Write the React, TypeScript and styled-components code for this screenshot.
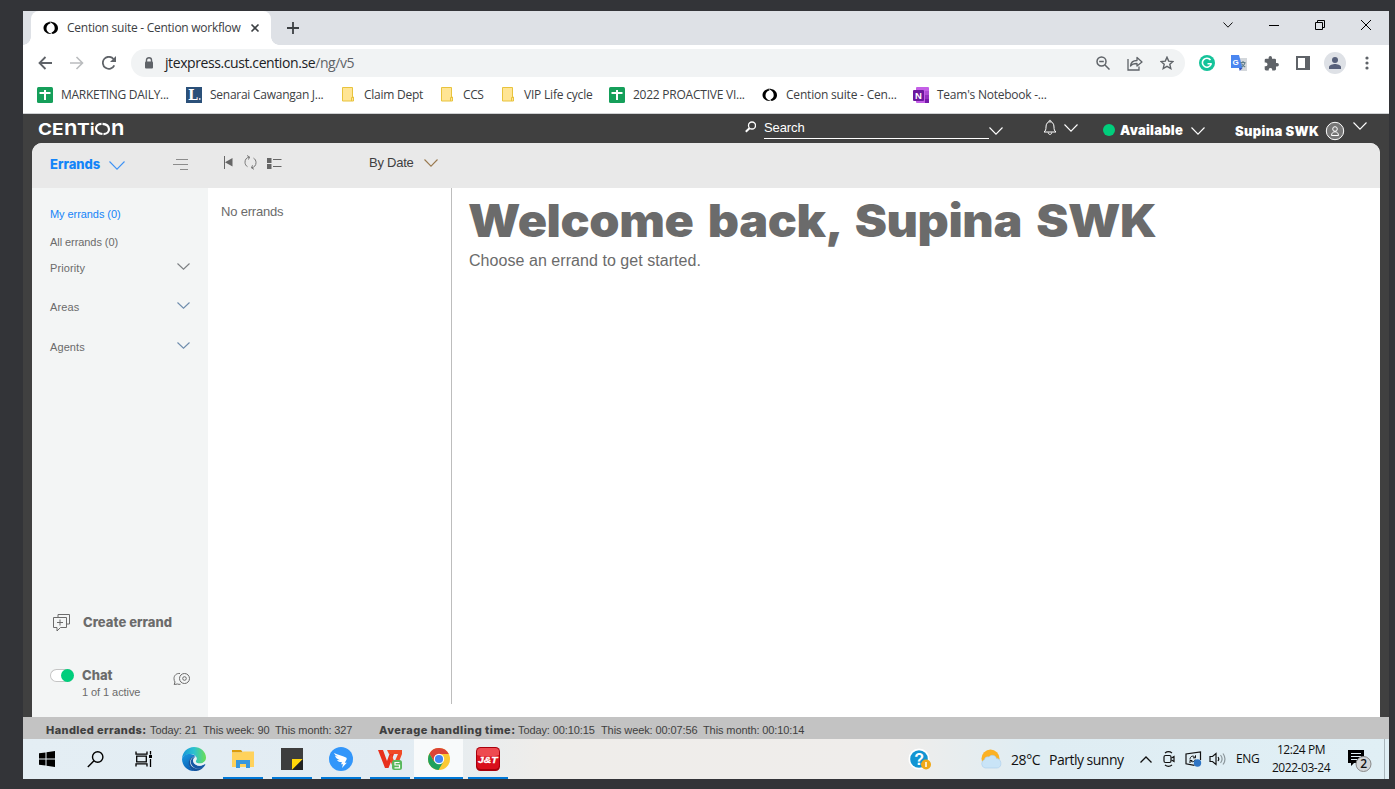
import React from 'react'
import styled, { createGlobalStyle, css } from 'styled-components'

const ui = '"Open Sans", "Noto Sans", sans-serif'
const arial = '"Liberation Sans", Arial, sans-serif'
const black = 'Inter, "Liberation Sans", sans-serif'

const GlobalStyle = createGlobalStyle`
  * {
    box-sizing: border-box;
  }
  body {
    margin: 0;
    background: #333438;
    overflow: hidden;
  }
  svg {
    display: block;
    flex: none;
  }
`

const Desktop = styled.div`
  width: 1395px;
  height: 789px;
  padding: 11px 6px 10px 23px;
  background: #333438;
`

const Screen = styled.div`
  display: flex;
  flex-direction: column;
  width: 1366px;
  height: 768px;
  background: #fff;
`

const Text = styled.span<{
  $size?: number
  $color?: string
  $spacing?: number
  $width?: number
  $font?: string
  $weight?: number
}>`
  display: block;
  flex: none;
  width: ${p => (p.$width ? `${p.$width}px` : 'auto')};
  font-family: ${p => p.$font || ui};
  font-size: ${p => p.$size || 12}px;
  font-weight: ${p => p.$weight || 400};
  letter-spacing: ${p => p.$spacing || 0}px;
  line-height: 16px;
  color: ${p => p.$color || '#3c4043'};
  white-space: nowrap;
`

const Slot = styled.div<{ $width?: number }>`
  display: flex;
  flex: none;
  align-items: center;
  justify-content: center;
  width: ${p => p.$width || 32}px;
  height: 100%;
`

/* browser */

const TabStrip = styled.div`
  display: flex;
  height: 34px;
  padding-left: 8px;
  background: #dee1e6;
`

const Tab = styled.div`
  position: relative;
  display: flex;
  align-items: center;
  width: 240px;
  height: 34px;
  padding-left: 12px;
  border-radius: 8px 8px 0 0;
  background: #fff;

  &::before, &::after {
    content: '';
    position: absolute;
    bottom: 0;
    width: 8px;
    height: 8px;
  }
  &::before {
    left: -8px;
    background: radial-gradient(circle at 0 0, transparent 7.5px, #fff 8px);
  }
  &::after {
    right: -8px;
    background: radial-gradient(circle at 100% 0, transparent 7.5px, #fff 8px);
  }
  ${Text} {
    margin-left: 8px;
  }
`

const WindowControls = styled.div`
  display: flex;
  height: 28px;
  margin-left: auto;
`

const Toolbar = styled.div`
  display: flex;
  align-items: center;
  height: 36px;
  padding: 0 6px;
`

const AddressBar = styled.div`
  display: flex;
  align-items: center;
  width: 1054px;
  height: 28px;
  margin: 0 6px;
  padding: 0 2px 0 12px;
  border-radius: 14px;
  background: #f1f3f4;

  ${Text} {
    margin: 0 auto 0 10px;
  }
  em {
    font-style: normal;
    color: #5f6368;
  }
`

const Bookmarks = styled.div`
  display: flex;
  height: 33px;
  padding: 0 0 5px 14px;
  border-bottom: 1px solid #cfd1d3;
`

const BookmarkItem = styled.div<{ $width: number; $gap: number }>`
  display: flex;
  flex: none;
  align-items: center;
  gap: ${p => p.$gap}px;
  width: ${p => p.$width}px;
`

/* Cention app */

const App_ = styled.div`
  display: flex;
  flex: 1;
  flex-direction: column;
  background: #404040;
`

const AppHeader = styled.header`
  display: flex;
  height: 29px;
  padding-left: 15px;
`

const Logo = styled.div`
  display: flex;
  align-items: baseline;
  width: 707px;
  height: 26px;
  font: 700 16.5px/26px ${black};
  color: #fff;

  span {
    display: block;
    transform-origin: 0 0;
  }
  svg {
    align-self: flex-start;
    margin-top: 8px;
  }
`

const LogoLetter = styled.span<{ $width: number; $scale: number; $small?: boolean }>`
  width: ${p => p.$width}px;
  transform: scaleX(${p => p.$scale});
  ${p => p.$small && css`font-size: 22px; font-weight: 600;`}
`

const SearchField = styled.div`
  width: 225px;
  height: 25px;
  margin-left: 8px;
  padding-top: 6px;
  border-bottom: 1px solid #fff;
`

const Drop = styled.div<{ $top: number; $left: number }>`
  flex: none;
  margin: ${p => p.$top}px 0 0 ${p => p.$left}px;
`

const Dot = styled.div`
  width: 12px;
  height: 12px;
  margin: 10px 5px 0 25px;
  border-radius: 50%;
  background: #00ce7c;
`

const Panel = styled.main`
  display: flex;
  flex: 1;
  flex-direction: column;
  margin: 0 9px;
  border-radius: 10px 10px 0 0;
  background: #fff;
  overflow: hidden;
`

const PanelHeader = styled.div`
  display: flex;
  height: 45px;
  background: #e9e9e9;
`

const PanelBody = styled.div`
  display: flex;
  flex: 1;
`

const Sidebar = styled.aside`
  display: flex;
  flex-direction: column;
  width: 176px;
  padding: 18px 18px 0;
  background: #f3f5f5;
`

const SidebarRow = styled.div<{ $height: number }>`
  display: flex;
  flex: none;
  justify-content: space-between;
  height: ${p => p.$height}px;
`

const CreateErrand = styled.div`
  display: flex;
  gap: 12px;
  height: 53px;
  margin-top: auto;
  padding-left: 2px;

  svg {
    margin-top: -1px;
  }
`

const ChatRow = styled.div`
  display: flex;
  height: 50px;
`

const Toggle = styled.div`
  display: flex;
  flex: none;
  justify-content: flex-end;
  width: 24px;
  height: 13px;
  margin: 2px 8px 0 0;
  border: 1px solid #c4c4c4;
  border-right: 0;
  border-radius: 7px;
  background: #fff;

  &::after {
    content: '';
    width: 13px;
    height: 13px;
    margin-top: -1px;
    border-radius: 50%;
    background: #00ce7c;
  }
`

const ErrandList = styled.section`
  width: 244px;
  height: 516px;
  padding: 16px 13px;
  border-right: 1px solid #bdbdbd;
`

const Welcome = styled.section`
  padding: 4px 0 0 17px;
`

const Heading = styled.h1`
  margin: 0 0 0 -1px;
  font: 900 45px/58px ${black};
  letter-spacing: -0.4px;
  word-spacing: 4.8px;
  color: #6b6b6b;
  white-space: nowrap;
  transform: scaleX(1.077);
  transform-origin: 0 0;
`

const StatusBar = styled.footer`
  display: flex;
  height: 22px;
  padding: 5px 0 0 23px;
  background: #c3c3c3;
`

/* Windows taskbar */

const Taskbar = styled.div`
  display: flex;
  height: 40px;
  background: linear-gradient(90deg, #e4eef4 0, #e2ecf3 28%, #efedea 38%, #efedeb 64%, #dfedf3 74%, #e0eff5 100%);
`

const TaskButton = styled.div<{ $running?: boolean; $active?: boolean }>`
  position: relative;
  display: flex;
  align-items: center;
  justify-content: center;
  width: 49px;
  height: 40px;
  background: ${p => (p.$active ? '#f8fafb' : 'transparent')};

  ${p => (p.$running || p.$active) && css`
    &::after {
      content: '';
      position: absolute;
      right: ${p.$active ? 0 : 4}px;
      bottom: 0;
      left: ${p.$active ? 0 : 5}px;
      height: 2px;
      background: #0078d7;
    }
  `}
`

const Tray = styled.div`
  display: flex;
  align-items: center;
  margin-left: auto;
`

const Clock = styled.div`
  display: flex;
  flex-direction: column;
  align-items: center;
  gap: 2px;
  width: 60px;
  margin: 0 15px 0 11px;
`

const ShowDesktop = styled.div`
  width: 5px;
  height: 40px;
  margin-left: 12px;
  border-left: 1px solid #a9b6bc;
`

const Icon: React.FC<{
  w: number
  h: number
  color?: string
  stroke?: number
  fill?: string
  children: React.ReactNode
}> = ({ w, h, color = '#5f6368', stroke = 1, fill = 'none', children }) => (
  <svg width={w} height={h} viewBox={`0 0 ${w} ${h}`} fill={fill} stroke={color} strokeWidth={stroke}>
    {children}
  </svg>
)

const Chevron: React.FC<{ w?: number; h?: number; color?: string }> = ({ w = 14, h = 8, color = '#fff' }) => (
  <Icon w={w} h={h} color={color} stroke={1.1}>
    <path d={`M.5 .5 L${w / 2} ${h - 0.8} L${w - 0.5} .5`} />
  </Icon>
)

const CentionMark = () => (
  <Icon w={16} h={14} color="none" fill="#000">
    <path d="M6.500 1C3 1.500.5 4 .5 7s2.800 5.800 6.800 6c1 0 1.700-.1 2.200-.4-3.700-.1-6-2.300-6-5.100C3.500 5 5 3 7.500 2.600z" />
    <path d="M5.500 1C9 .2 15 2 15 7.200c0 3-2.300 5.200-5.500 5.800l-1-1.600c2.200-.6 3.200-2.200 3.200-4.200C11.700 4 9.500 1.700 5.500 1z" />
  </Icon>
)

const SheetsIcon = () => (
  <Icon w={16} h={16} color="none">
    <rect width="16" height="16" rx="1.500" fill="#159f5a" />
    <path d="M2.500 6h11M8 3v10" stroke="#fff" strokeWidth="2" />
  </Icon>
)

const LetterIcon = () => (
  <Icon w={16} h={16} color="none">
    <rect width="16" height="16" fill="#2b5079" />
    <text x="2" y="13" fontFamily="DejaVu Serif" fontWeight="700" fontSize="14" fill="#fff">L</text>
    <path d="M13 12h1.500" stroke="#fff" strokeWidth="1.500" />
  </Icon>
)

const FolderIcon = () => (
  <Icon w={12} h={15} color="#e8c33d">
    <path d="M.5.5h10v9.500h1v4H.5z" fill="#ffe594" />
    <path d="M9.500 14v-3.500h2" />
  </Icon>
)

const OneNoteIcon = () => (
  <Icon w={16} h={16} color="none">
    <rect x="3" width="13" height="16" rx="1" fill="#c45fe6" />
    <path d="M12 4h4v4h-4z" fill="#ae4bd5" />
    <path d="M12 8h4v4h-4z" fill="#9332bf" />
    <path d="M12 12h4v4h-4z" fill="#7719aa" />
    <rect y="3" width="11" height="11" rx="1" fill="#6c179e" />
    <text x="2" y="12" fontFamily="Liberation Sans" fontWeight="700" fontSize="9.500" fill="#fff">N</text>
  </Icon>
)

const bookmarks = [
  { label: 'MARKETING DAILY...', icon: <SheetsIcon />, width: 149, gap: 8, text: -0.28 },
  { label: 'Senarai Cawangan J...', icon: <LetterIcon />, width: 156, gap: 8, text: -0.26 },
  { label: 'Claim Dept', icon: <FolderIcon />, width: 99, gap: 10, text: -0.25 },
  { label: 'CCS', icon: <FolderIcon />, width: 61, gap: 10, text: -0.4 },
  { label: 'VIP Life cycle', icon: <FolderIcon />, width: 107, gap: 10, text: -0.2 },
  { label: '2022 PROACTIVE VI...', icon: <SheetsIcon />, width: 153, gap: 8, text: -0.24 },
  { label: 'Cention suite - Cen...', icon: <CentionMark />, width: 151, gap: 8, text: -0.2 },
  { label: "Team's Notebook -...", icon: <OneNoteIcon />, width: 150, gap: 8, text: -0.24 },
]

const Browser = () => (
  <>
    <TabStrip>
      <Tab>
        <CentionMark />
        <Text $width={183} $spacing={-0.26}>Cention suite - Cention workflow</Text>
        <Icon w={10} h={10} color="#3c4043" stroke={1.6}><path d="M1.500 1.500l7 7M8.500 1.500l-7 7" /></Icon>
      </Tab>
      <Slot $width={44}>
        <Icon w={12} h={12} color="#3c4043" stroke={1.8}><path d="M6 0v12M0 6h12" /></Icon>
      </Slot>
      <WindowControls>
        <Slot $width={46}><Icon w={10} h={6} color="#111"><path d="M.5.5 5 5.200 9.500.5" /></Icon></Slot>
        <Slot $width={46}><Icon w={10} h={1} color="#000"><path d="M0 .5h10" /></Icon></Slot>
        <Slot $width={46}>
          <Icon w={10} h={10} color="#000"><path d="M.5 2.500h7v7h-7zM2.500 2.500v-2h7v7h-2" /></Icon>
        </Slot>
        <Slot $width={46}><Icon w={10} h={10} color="#000"><path d="M0 0l10 10M10 0 0 10" /></Icon></Slot>
      </WindowControls>
    </TabStrip>
    <Toolbar>
      <Slot><Icon w={14} h={14} stroke={1.8}><path d="M14 7H1.500M7.500 1l-6 6 6 6" /></Icon></Slot>
      <Slot><Icon w={14} h={14} color="#babcbe" stroke={1.6}><path d="M0 7h12.500M6.500 1l6 6-6 6" /></Icon></Slot>
      <Slot>
        <Icon w={14} h={14} stroke={1.8}>
          <path d="M12.300 9.300A6 6 0 1 1 11.500 3" />
          <path d="M14 0v6H8z" fill="#5f6368" stroke="none" />
        </Icon>
      </Slot>
      <AddressBar>
        <Slot $width={12}>
          <Icon w={10} h={12} color="#5f6368" stroke={1.4}>
            <path d="M2.500 5V3a2.500 2.300 0 0 1 5 0v2" />
            <rect x="1" y="4.500" width="8" height="7" fill="#5f6368" stroke="none" rx="1" />
          </Icon>
        </Slot>
        <Text $size={14} $spacing={-0.41} $color="#202124">jtexpress.cust.cention.se<em>/ng/v5</em></Text>
        <Slot>
          <Icon w={14} h={14} stroke={1.5}>
            <circle cx="5.500" cy="5.500" r="4.500" />
            <path d="M9 9l4.500 4.500M3.200 5.500h4.600" />
          </Icon>
        </Slot>
        <Slot>
          <Icon w={16} h={15} stroke={1.3}>
            <path d="M1 3v11h11V10.500" />
            <path d="M3.500 10c.3-3.500 3-5.500 6.500-5.500V1.500L15 6l-5 4V7.500C7.500 7.500 5 8 3.500 10z" strokeLinejoin="round" />
          </Icon>
        </Slot>
        <Slot>
          <Icon w={14} h={14} stroke={1.4}>
            <path d="M7 1.200l1.700 3.900 4.300.4-3.200 2.800 1 4.200L7 10.300l-3.800 2.200 1-4.200L1 5.500l4.300-.4z" />
          </Icon>
        </Slot>
      </AddressBar>
      <Slot>
        <Icon w={16} h={16} color="#fff" stroke={1.6}>
          <circle cx="8" cy="8" r="8" fill="#15c39a" stroke="none" />
          <path d="M11.500 5A4.500 4.500 0 1 0 12 9.500V8.700H8.500" />
        </Icon>
      </Slot>
      <Slot>
        <Icon w={16} h={16} color="none">
          <path d="M6 3h10v13H10z" fill="#d3d7db" />
          <path d="M0 0h8l3.500 13H0z" fill="#4a86f0" />
          <path d="M8 13h3.500L8.800 16z" fill="#3550b8" />
          <text x="1.500" y="9.500" fontFamily="Liberation Sans" fontWeight="700" fontSize="8" fill="#fff">G</text>
          <path d="M9.500 7.500h5M12 6v1.500M14 8c-.8 2-2 3.200-3.500 4M10.500 8.500c.8 1.500 2 2.700 3.700 3.500" stroke="#607d8b" strokeWidth="1.100" />
        </Icon>
      </Slot>
      <Slot>
        <Icon w={15} h={15} fill="#5f6368" color="none">
          <path d="M13.200 7H12V4a1.300 1.300 0 0 0-1.300-1.300H8V1.800a1.700 1.700 0 0 0-3.400 0v.9H2A1.300 1.300 0 0 0 .7 4v2.600h1a1.800 1.800 0 0 1 0 3.600h-1v2.900c0 .7.600 1.300 1.300 1.300h2.700v-1a1.800 1.800 0 0 1 3.500 0v1h2.500c.7 0 1.300-.6 1.300-1.300v-2.700h1.200a1.700 1.700 0 0 0 0-3.400z" />
        </Icon>
      </Slot>
      <Slot>
        <Icon w={14} h={14} stroke={2}>
          <path d="M1 1h12v12H1z" />
          <path d="M9 1h4v12H9z" fill="#5f6368" stroke="none" />
        </Icon>
      </Slot>
      <Slot>
        <Icon w={22} h={22} color="none" fill="#57607a">
          <circle cx="11" cy="11" r="11" fill="#dee1e6" />
          <circle cx="11" cy="8" r="3" />
          <path d="M5 17v-2c0-2 4-3 6-3s6 1 6 3v2z" />
        </Icon>
      </Slot>
      <Slot>
        <Icon w={4} h={14} color="none" fill="#5f6368">
          <circle cx="2" cy="2" r="1.600" />
          <circle cx="2" cy="7" r="1.600" />
          <circle cx="2" cy="12" r="1.600" />
        </Icon>
      </Slot>
    </Toolbar>
    <Bookmarks>
      {bookmarks.map(b => (
        <BookmarkItem key={b.label} $width={b.width} $gap={b.gap}>
          {b.icon}
          <Text $spacing={b.text}>{b.label}</Text>
        </BookmarkItem>
      ))}
    </Bookmarks>
  </>
)

const Header = () => (
  <AppHeader>
    <Logo>
      <LogoLetter $width={14} $scale={1.15}>C</LogoLetter>
      <LogoLetter $width={12} $scale={1.15}>E</LogoLetter>
      <LogoLetter $width={13} $scale={1} $small>n</LogoLetter>
      <LogoLetter $width={13} $scale={1.15}>T</LogoLetter>
      <LogoLetter $width={4} $scale={1}>i</LogoLetter>
      <Icon w={17} h={14} color="#fff" stroke={2.2}>
        <path d="M7.500 1.800C4 2 1.900 4.200 2 6.800c.2 2.800 2.700 4.800 6.500 5.200M9.500 12.100c3.500-.2 5.600-2.400 5.500-5-.2-2.800-2.700-5-6.500-5.300" />
      </Icon>
      <LogoLetter $width={14} $scale={1} $small>n</LogoLetter>
    </Logo>
    <Drop $top={7} $left={0}>
      <Icon w={11} h={12} color="#fff" stroke={1.3}>
        <circle cx="7" cy="4.500" r="3.500" />
        <path d="M4.500 7.200.8 10.800" strokeWidth="2" />
      </Icon>
    </Drop>
    <SearchField>
      <Text $font={arial} $size={13} $color="#fff" $spacing={-0.1}>Search</Text>
    </SearchField>
    <Drop $top={13} $left={0}><Chevron /></Drop>
    <Drop $top={5} $left={40}>
      <Icon w={14} h={17} color="#fff">
        <path d="M1 13h12c-1.600-1.200-2-2.500-2-5 0-3.300-1.500-5.200-4-5.200S3 4.700 3 8c0 2.500-.4 3.800-2 5zM5.200 13.500c0 2.500 3.600 2.500 3.600 0M5.800 2.800c0-2 2.400-2 2.400 0" />
      </Icon>
    </Drop>
    <Drop $top={10} $left={7}><Chevron /></Drop>
    <Dot />
    <Drop $top={8} $left={0}>
      <Text $font={black} $weight={900} $size={13} $color="#fff" $width={71} $spacing={0.25}>Available</Text>
    </Drop>
    <Drop $top={13} $left={0}><Chevron /></Drop>
    <Drop $top={9} $left={30}>
      <Text $font={black} $weight={900} $size={13} $color="#fff" $width={90} $spacing={0.35}>Supina SWK</Text>
    </Drop>
    <Drop $top={7} $left={0}>
      <Icon w={20} h={20} color="#fff">
        <circle cx="10" cy="10" r="8.700" fill="#777" />
        <circle cx="10" cy="8" r="2.300" />
        <path d="M6.500 14.500c0-5 7-5 7 0z" />
      </Icon>
    </Drop>
    <Drop $top={8} $left={8}><Chevron /></Drop>
  </AppHeader>
)

const groups = [
  { label: 'Priority', height: 39, arrow: '#7c7f82' },
  { label: 'Areas', height: 40, arrow: '#6f8dad' },
  { label: 'Agents', height: 20, arrow: '#6f8dad' },
]

const Errands = () => (
  <Panel>
    <PanelHeader>
      <Drop $top={13} $left={18}>
        <Text $font={black} $weight={800} $size={13} $color="#1384f8" $width={59}>Errands</Text>
      </Drop>
      <Drop $top={18} $left={0}><Chevron w={16} h={9} color="#3f93f5" /></Drop>
      <Drop $top={16} $left={48}>
        <Icon w={16} h={11} color="#8c8c8c">
          <path d="M3 .5h12M0 5.500h15M7 10.500h8" />
        </Icon>
      </Drop>
      <Drop $top={12} $left={34}>
        <Icon w={10} h={15} color="#666">
          <path d="M1.500 1v13" />
          <path d="M9.500 3v8.500L2 7.200z" fill="#666" stroke="none" />
        </Icon>
      </Drop>
      <Drop $top={12} $left={11}>
        <Icon w={13} h={15} color="#777">
          <path d="M5.500 2C2.500 2.500 1 4.500 1 7.200c0 2 .9 3.600 2.500 4.500M7.500 12.800c3-.5 4.500-2.500 4.500-5.200 0-2-.9-3.600-2.500-4.500" />
          <path d="M3 .5 5.500 2 4.500 4.500M10 14.300 7.500 12.800l1-2.500" />
        </Icon>
      </Drop>
      <Drop $top={15} $left={10}>
        <Icon w={15} h={12} color="#666">
          <path d="M0 0h4.500v5H0zM0 6h4.500v5H0z" fill="#666" stroke="none" />
          <path d="M6 1.500H14.500M6 8.500H14.500" />
        </Icon>
      </Drop>
      <Drop $top={12} $left={87}>
        <Text $font={arial} $size={13} $color="#3f3f3f" $width={55} $spacing={-0.25}>By Date</Text>
      </Drop>
      <Drop $top={16} $left={0}><Chevron w={14} color="#9a7a50" /></Drop>
    </PanelHeader>
    <PanelBody>
      <Sidebar>
        <SidebarRow $height={28}>
          <Text $font={arial} $size={11} $color="#1384f8" $spacing={-0.07}>My errands (0)</Text>
        </SidebarRow>
        <SidebarRow $height={26}>
          <Text $font={arial} $size={11} $color="#6b6b6b" $spacing={-0.07}>All errands (0)</Text>
        </SidebarRow>
        {groups.map(g => (
          <SidebarRow key={g.label} $height={g.height}>
            <Text $font={arial} $size={11} $color="#6b6b6b" $spacing={0.1}>{g.label}</Text>
            <Drop $top={3} $left={0}><Chevron w={13} h={7} color={g.arrow} /></Drop>
          </SidebarRow>
        ))}
        <CreateErrand>
          <Icon w={19} h={19} color="#6b6b6b">
            <path d="M1.500 4.500h13v10H8.500L5 18v-3.500H1.500zM6 4V1.500h11.500v9.500H15M8 6.500v6M5 9.500h6" />
          </Icon>
          <Text $font={black} $weight={800} $size={13} $color="#6b6b6b" $spacing={0.05}>Create errand</Text>
        </CreateErrand>
        <ChatRow>
          <Toggle />
          <div>
            <Text $font={black} $weight={800} $size={13} $color="#6b6b6b" $width={91}>Chat</Text>
            <Drop $top={1} $left={0}>
              <Text $font={arial} $size={11} $color="#6b6b6b" $spacing={-0.07}>1 of 1 active</Text>
            </Drop>
          </div>
          <Drop $top={5} $left={0}>
            <Icon w={18} h={14} color="#6b6b6b">
              <path d="M7 1.500C3.500 1 1 3.500 1 6.500c0 1.500.4 2.600 1 3.500L1.200 12.500 4.500 12c1 .4 2 .5 3 .2" />
              <circle cx="11.500" cy="6.500" r="5" />
              <circle cx="11.500" cy="6.500" r="1.800" />
            </Icon>
          </Drop>
        </ChatRow>
      </Sidebar>
      <ErrandList>
        <Text $font={arial} $size={13} $color="#6b6b6b" $spacing={-0.2}>No errands</Text>
      </ErrandList>
      <Welcome>
        <Heading>Welcome back, Supina SWK</Heading>
        <Drop $top={3} $left={0}>
          <Text $font={arial} $size={16} $color="#6b6b6b" $spacing={0.05}>Choose an errand to get started.</Text>
        </Drop>
      </Welcome>
    </PanelBody>
  </Panel>
)

const Status = () => (
  <StatusBar>
    <Text $font={black} $weight={800} $size={11} $color="#3f3f3f" $width={104} $spacing={0.4}>Handled errands:</Text>
    <Text $font={arial} $size={11} $color="#3f3f3f" $width={53} $spacing={-0.1}>Today: 21</Text>
    <Text $font={arial} $size={11} $color="#3f3f3f" $width={72} $spacing={-0.1}>This week: 90</Text>
    <Text $font={arial} $size={11} $color="#3f3f3f" $width={104} $spacing={-0.1}>This month: 327</Text>
    <Text $font={black} $weight={800} $size={11} $color="#3f3f3f" $width={139} $spacing={0.48}>Average handling time:</Text>
    <Text $font={arial} $size={11} $color="#3f3f3f" $width={83} $spacing={-0.1}>Today: 00:10:15</Text>
    <Text $font={arial} $size={11} $color="#3f3f3f" $width={102} $spacing={-0.1}>This week: 00:07:56</Text>
    <Text $font={arial} $size={11} $color="#3f3f3f" $spacing={-0.1}>This month: 00:10:14</Text>
  </StatusBar>
)

const WindowsTaskbar = () => (
  <Taskbar>
    <Slot $width={48}>
      <Icon w={16} h={16} color="none" fill="#000">
        <path d="M0 2.300 6.500 1.400v6.100H0zM7.500 1.200 16 0v7.500H7.500zM0 8.500h6.500v6.100L0 13.700zM7.500 8.500H16V16l-8.500-1.200z" />
      </Icon>
    </Slot>
    <Slot $width={48}>
      <Icon w={17} h={17} color="#000" stroke={1.4}>
        <circle cx="10.700" cy="6" r="5.200" />
        <path d="M7 9.800.8 16" />
      </Icon>
    </Slot>
    <Slot $width={48}>
      <Icon w={17} h={16} color="#000" stroke={1.3}>
        <path d="M1 .5v2.700h11V.5M1 15.500v-2.700h11v2.700M1.700 5.200h9.600v5.600H1.700zM15.500 0v3.500M15.500 8v8" />
        <path d="M14 4h3v3h-3z" fill="#000" stroke="none" />
      </Icon>
    </Slot>
    <Slot $width={2} />
    <TaskButton>
      <svg width="24" height="24" viewBox="0 0 24 24">
        <defs>
          <linearGradient id="edgeTop" x1="0" y1="0.300" x2="1" y2="0.300">
            <stop offset="0" stopColor="#1696d8" />
            <stop offset="0.500" stopColor="#2cc1d0" />
            <stop offset="1" stopColor="#6adf52" />
          </linearGradient>
          <linearGradient id="edgeBody" x1="0" y1="0" x2="0.500" y2="1">
            <stop offset="0" stopColor="#1a9be2" />
            <stop offset="1" stopColor="#0a5fb5" />
          </linearGradient>
        </defs>
        <path d="M0 11.500C.5 5 5.500 0 12 0s12 4.700 12 10.500c0 3.500-2.700 6-6 6-2.700 0-4.300-1-4.300-2 0-.7.900-1.200.9-2.800C14.600 9 12 7 8.500 7 4.500 7 1.500 8.500 0 11.500z" fill="url(#edgeTop)" />
        <path d="M0 12C.8 8.700 4.200 6.800 8 7c2.700.1 4.300 1 5.300 2.200-3.300 0-6.300 3-6.300 6.800 0 4 2.500 7 6 8C6 24.500 0 19 0 12z" fill="url(#edgeBody)" />
        <path d="M13 9.500C10 10 8 12.500 8.200 15.500c.3 4 3.800 6 7.800 6 2.500 0 4.500-.8 6.200-2.500-2 4-7 5.800-10.700 4.700C8 22.500 6.500 19 6.800 15.500 7 12 9.500 9.200 13 9.500z" fill="#15549d" />
        <path d="M14.300 9.800c-2 .2-3.300 2-3 4 .4 3 3.300 5 6.700 4.900 1.700 0 3.300-.5 4.700-1.400.5-.2.700.2.500.7-2 3.300-5.500 4.500-9 3.500-4-1.200-6-4.500-5.300-7.700.5-2.300 2.500-4.200 5.400-4z" fill="#1558a5" />
        <path d="M14.500 10.500c.5 2-.8 2.800-.8 4 0 1 1.500 2 4.300 2 2.500 0 4.500-1 5.500-3 .7 2.500-2.500 5.200-6 5.200-4 0-6.600-2.500-6.400-5.200.2-1.700 1.500-3.200 3.400-3z" fill="#e9f3f6" />
      </svg>
    </TaskButton>
    <TaskButton $running>
      <Icon w={22} h={18} color="none">
        <path d="M0 0h9l2 2.500H0z" fill="#dc9c0c" />
        <path d="M0 2.500h10l1.500-1H22V17H0z" fill="#ffd25c" />
        <path d="M4 10h14v8h-4v-4H8v4H4z" fill="#3897dd" />
      </Icon>
    </TaskButton>
    <TaskButton $running>
      <Icon w={22} h={22} color="none">
        <path d="M0 0h22v12L12 22H0z" fill="#3d3d3d" />
        <path d="M11 11h11L11 22z" fill="#ffd60a" />
        <path d="M22 11v11H11z" fill="#222" />
      </Icon>
    </TaskButton>
    <TaskButton $running>
      <Icon w={24} h={24} color="none">
        <circle cx="12" cy="12" r="12" fill="#3296fa" />
        <path d="M5 6c4 2 8 2.500 12 4.500 1 .6.800 1.500.3 2.500l-1.500 2.700h2L13 21l1-3.700h-2l1-2c-2.500 0-4-1-5-2.300l3 .2C8 12 6.500 10.500 6 8.500l3 1.300C7 8.500 5.500 7.500 5 6z" fill="#fff" />
      </Icon>
    </TaskButton>
    <TaskButton $running>
      <Icon w={24} h={22} color="none">
        <path d="M0 2h5l4 11 2.500-7H16l-5.500 14H7z" fill="#e8301d" />
        <path d="M9 2h15v4l-5.500 14H15L11.500 10l1.700-4L16.500 14 20 6h-9z" fill="#f04a26" />
        <rect x="14" y="12" width="10" height="10" rx="2.500" fill="#58b85c" />
        <path d="M21.500 14.500h-4.500v2.500h4.500v2.800h-5" stroke="#fff" strokeWidth="1.200" />
      </Icon>
    </TaskButton>
    <TaskButton $active>
      <Icon w={22} h={22} color="none">
        <circle cx="11" cy="11" r="11" fill="#fbc934" />
        <path d="M1.500 5.500A11 11 0 0 0 10.500 22L15.500 13.500 6.200 13.500z" fill="#1fa15d" />
        <path d="M1.500 5.500 6.300 13.700 11 6h9.800A11 11 0 0 0 1.500 5.500z" fill="#db4437" />
        <circle cx="11" cy="11" r="5.200" fill="#fff" />
        <circle cx="11" cy="11" r="4.100" fill="#4285f4" />
      </Icon>
    </TaskButton>
    <TaskButton $running>
      <Icon w={24} h={24} color="none">
        <rect width="24" height="24" rx="4.500" fill="#a8000c" />
        <rect x="1" y="1" width="22" height="21" rx="4" fill="#d9101c" />
        <path d="M1 5a4 4 0 0 1 4-4h14a4 4 0 0 1 4 4v3C16 10 8 10 1 8z" fill="#ee4a50" />
        <text x="2" y="15.500" fontFamily="Liberation Sans" fontWeight="700" fontStyle="italic" fontSize="9.500" fill="#fff" stroke="#fff" strokeWidth="0.300" textLength="19.500" lengthAdjust="spacingAndGlyphs">J&amp;T</text>
      </Icon>
    </TaskButton>
    <Tray>
      <Drop $top={2} $left={0}>
        <Icon w={24} h={24} color="none">
          <circle cx="11" cy="11" r="10.500" fill="#fff" />
          <circle cx="11" cy="11" r="8.800" fill="#1295d3" />
          <text x="6.200" y="17" fontFamily="Liberation Sans" fontWeight="700" fontSize="16" fill="#fff">?</text>
          <circle cx="18" cy="16.500" r="5" fill="#f0a818" />
          <path d="M18 14v5" stroke="#fff" strokeWidth="1.500" />
        </Icon>
      </Drop>
      <Slot $width={79}>
        <Drop $top={0} $left={39}>
          <Icon w={22} h={20} color="none">
            <circle cx="10.500" cy="9.500" r="9" fill="#fbb124" />
            <path d="M5 19a4.500 4.500 0 0 1-.5-8.500C5 8 7 7.500 9 8c1.500-2.500 6.500-2.500 7.500 1.500C22 9.500 22.500 19 17 19z" fill="#c9e4f7" stroke="#a9cdec" strokeWidth="0.600" />
          </Icon>
        </Drop>
      </Slot>
      <Drop $top={2} $left={0}>
        <Text $size={14} $color="#111" $width={38} $spacing={-0.4}>28°C</Text>
      </Drop>
      <Drop $top={2} $left={0}>
        <Text $size={14} $color="#111" $width={91} $spacing={-0.5}>Partly sunny</Text>
      </Drop>
      <Icon w={12} h={7} color="#111" stroke={1.3}><path d="M.5 6.500 6 1l5.500 5.500" /></Icon>
      <Slot $width={33}>
        <Icon w={12} h={16} color="#111" stroke={1.2}>
          <rect x="1" y="4.500" width="7" height="7" rx="1.500" />
          <path d="M8.500 7 11 5.500v5L8.500 9M2 2C4 .5 7 .5 9 2M2 14c2 1.500 5 1.500 7 0" />
        </Icon>
      </Slot>
      <Icon w={17} h={16} color="#111" stroke={1.2}>
        <path d="M9.500 14.300 1 12.800V3L15.500 1v8" />
        <path d="M5 8.500c0-3.500 3.500-4.500 5-2M10.500 4.300v2.500H8M10.200 8.500c-.7 2.500-3.700 3-4.900 1M5 12V9.500h2.300" strokeWidth="1" />
        <circle cx="12.500" cy="12" r="3.700" fill="#2d74c4" stroke="none" />
      </Icon>
      <Slot $width={30}>
        <Icon w={17} h={14} color="#111" stroke={1.2}>
          <path d="M1 4.500h2.500L7 1.500v11L3.500 9.500H1zM9 5c1 1.300 1 2.700 0 4" />
          <path d="M11.500 3c2 2.500 2 5.500 0 8M14 1.500c2.500 3.500 2.500 7.500 0 11" stroke="#8c979c" />
        </Icon>
      </Slot>
      <Drop $top={0} $left={4}>
        <Text $color="#111" $width={24} $spacing={-0.3}>ENG</Text>
      </Drop>
      <Clock>
        <Text $color="#111" $spacing={-0.45}>12:24 PM</Text>
        <Text $color="#111" $spacing={-0.45}>2022-03-24</Text>
      </Clock>
      <Icon w={26} h={26} color="none">
        <path d="M2 4h16v13H8l-3 3v-3H2z" fill="#000" />
        <path d="M5 7.500h10M5 10.500h10M5 13.500h6" stroke="#e0eff5" strokeWidth="1.100" />
        <circle cx="17.500" cy="18" r="7.500" fill="#d3d6d8" stroke="#888" />
        <text x="14.200" y="22.300" fontFamily="Open Sans" fontWeight="600" fontSize="12" fill="#111">2</text>
      </Icon>
      <ShowDesktop />
    </Tray>
  </Taskbar>
)

const App: React.FC = function () {
  return (
    <Desktop>
      <GlobalStyle />
      <Screen>
        <Browser />
        <App_>
          <Header />
          <Errands />
          <Status />
        </App_>
        <WindowsTaskbar />
      </Screen>
    </Desktop>
  )
}

export default App
